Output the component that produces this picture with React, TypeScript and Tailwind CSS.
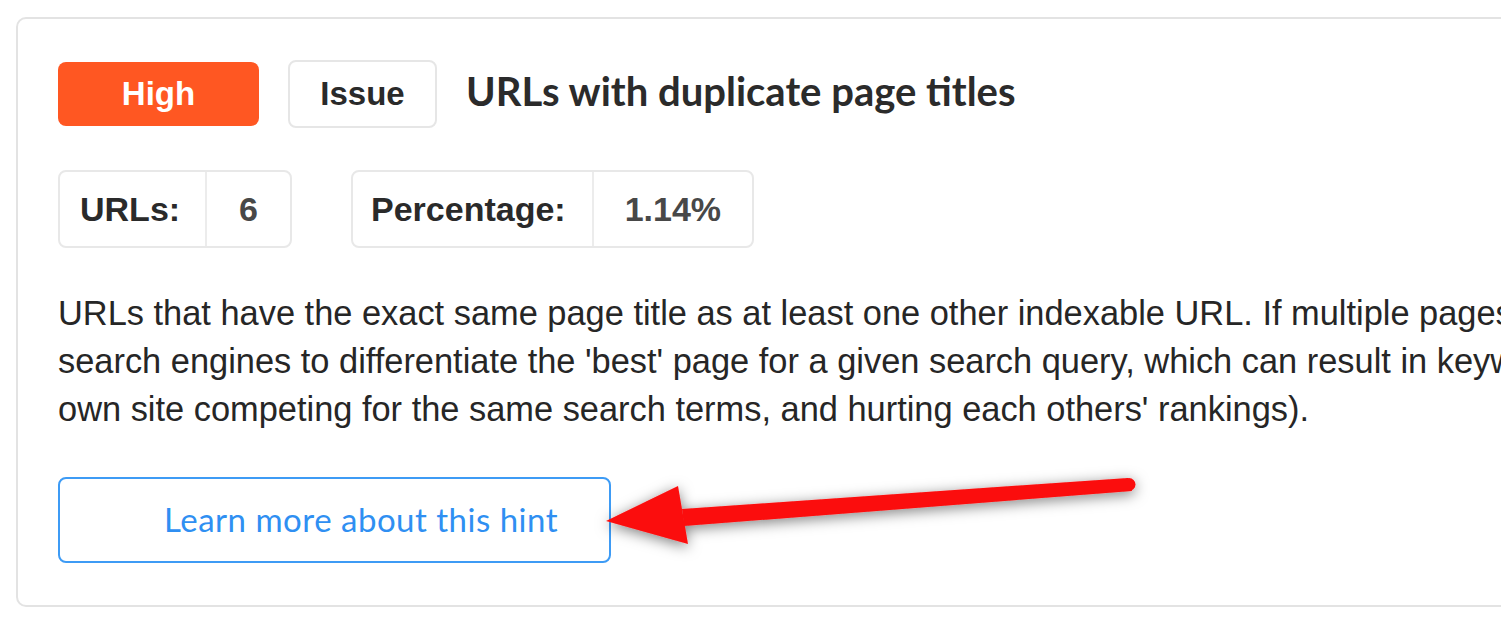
import React from "react";

const arial = { fontFamily: '"Liberation Sans", Arial, sans-serif' };

function Arrow() {
  return (
    <svg
      className="absolute left-0 top-0 pointer-events-none"
      width="1501"
      height="629"
      viewBox="0 0 1501 629"
    >
      <defs>
        <filter id="sh" x="-20%" y="-50%" width="140%" height="200%">
          <feDropShadow dx="0" dy="3" stdDeviation="7" floodColor="#000" floodOpacity="0.5" />
        </filter>
      </defs>
      <g filter="url(#sh)" fill="#fb0a0a">
        <polygon points="1128,478 1132,491 684,526 682,509" />
        <circle cx="1129" cy="484.5" r="6.5" />
        <polygon points="606,521 678,486 688,544" />
      </g>
    </svg>
  );
}

export default function App() {
  return (
    <div className="relative w-[1501px] h-[629px] overflow-hidden bg-white">
      <div className="ml-[16px] mt-[17px] w-[2400px] h-[590px] border-2 border-[#e3e3e3] rounded-[10px] bg-white pl-[40px] pt-[41px]">
        {/* Header row */}
        <div className="flex items-center">
          <div
            className="w-[201px] h-[64px] bg-[#ff5722] rounded-[8px] flex items-center justify-center text-white font-bold text-[33px]"
            style={arial}
          >
            High
          </div>
          <div
            className="ml-[29px] w-[149px] h-[68px] border-2 border-[#e6e6e6] rounded-[8px] flex items-center justify-center text-[#2a2a2a] font-bold text-[33px]"
            style={arial}
          >
            Issue
          </div>
          <div
            className="ml-[29px] text-[40px] font-bold text-[#2b2b2b] leading-none pb-[6px]"
            style={{ fontFamily: "Lato, sans-serif" }}
          >
            URLs with duplicate page titles
          </div>
        </div>

        {/* Stats row */}
        <div className="flex mt-[42px] gap-[59px]" style={arial}>
          <div className="flex h-[78px] border-2 border-[#e8e8e8] rounded-[8px] text-[34px] font-bold">
            <div className="flex items-center pl-[20px] pr-[25px] text-[#2a2a2a]">URLs:</div>
            <div className="flex items-center px-[32px] border-l-2 border-[#ececec] text-[#484848]">6</div>
          </div>
          <div className="flex h-[78px] border-2 border-[#e8e8e8] rounded-[8px] text-[34px] font-bold">
            <div className="flex items-center pl-[18px] pr-[26px] text-[#2a2a2a]">Percentage:</div>
            <div className="flex items-center px-[31px] border-l-2 border-[#ececec] text-[#484848]">1.14%</div>
          </div>
        </div>

        {/* Description */}
        <p
          className="mt-[41px] text-[34.4px] leading-[48px] text-[#262626] whitespace-nowrap"
          style={arial}
        >
          URLs that have the exact same page title as at least one other indexable URL. If multiple pages have the same title, this can make it difficult for
          <br />
          search engines to differentiate the 'best' page for a given search query, which can result in keyword cannibalization (multiple pages on your
          <br />
          own site competing for the same search terms, and hurting each others' rankings).
        </p>

        {/* Button */}
        <div
          className="mt-[44px] w-[553px] h-[86px] border-2 border-[#3d9bf5] rounded-[8px] flex items-center pl-[104px] text-[33px] tracking-[0.5px] text-[#2f8ff2]"
          style={{ fontFamily: "Lato, sans-serif" }}
        >
          Learn more about this hint
        </div>
      </div>
      <Arrow />
    </div>
  );
}
